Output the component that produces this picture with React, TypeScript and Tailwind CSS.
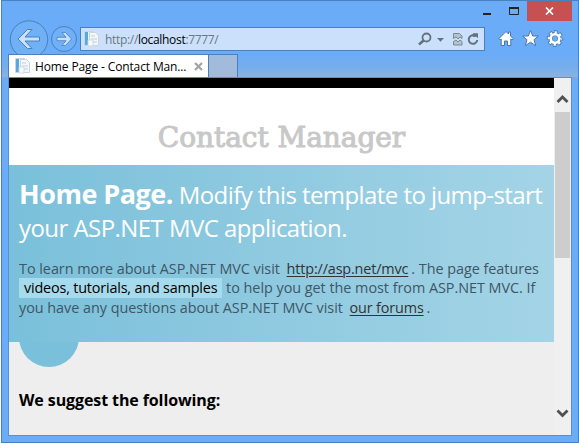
import type { ReactNode } from "react";

function PageIcon() {
  return (
    <svg className="block shrink-0" width="16" height="16" viewBox="0 0 16 16">
      <path d="M.5.5h9v14h-9z" fill="#f1f6fb" stroke="#c9d5df" />
      <path d="M1 1h3v13H1z" fill="#56a9dc" />
      <path d="M5.500 1.500h6l3 3v10h-9z" fill="#f4f7fa" stroke="#c9d5df" />
      <path d="M7 5h4M7 8h6M7 11h6" stroke="#c3cdd6" />
      <path d="M4 9h5v6H4z" fill="#f7f9fb" stroke="#ccd5dd" strokeWidth=".8" />
    </svg>
  );
}

function TitleBar() {
  return (
    <div className="flex h-5 shrink-0 justify-end pr-[6px]">
      <svg className="block" width="54" height="20" viewBox="473 1 54 20">
        <path d="M483 13h8v2h-8z" fill="#222" />
        <path d="M509.500 8h9v6.500h-9z" fill="none" stroke="#222" />
        <path d="M509 7h10v2h-10z" fill="#222" />
      </svg>
      <div className="flex h-5 w-[45px] items-center justify-center bg-[#c75050]">
        <svg width="9" height="8" viewBox="0 0 9 8">
          <path d="M1 .5l7 7M8 .5l-7 7" stroke="#fff" strokeWidth="1.700" />
        </svg>
      </div>
    </div>
  );
}

function NavRow() {
  return (
    <div className="flex h-[33px] shrink-0 items-start">
      <svg className="block shrink-0 overflow-visible" width="78" height="33" viewBox="2 21 78 33">
        <circle cx="29" cy="39.500" r="18.700" fill="#6fb0f7" stroke="#4a80bd" />
        <path d="M18 39L27.500 29.500H32L25 37H39.500V41H25L32 48.500H27.500Z" fill="#cbe1fb" stroke="#4a80bd" />
        <circle cx="64" cy="39" r="12.500" fill="#6fb0f7" stroke="#4a80bd" />
        <path d="M71.500 39L65.500 32.500H62L66 37.300H57V40.700H66L62 45.500H65.500Z" fill="#cbe1fb" stroke="#4a80bd" strokeWidth=".8" />
      </svg>
      <div className="mt-[6px] flex h-6 w-[405px] shrink-0 items-center border border-[#4a80bd] bg-[#cbe1fb] pl-[3px]">
        <PageIcon />
        <span className="ml-[5px] whitespace-nowrap pt-px text-[12px] tracking-[-0.32px] text-[#6d7783]">
          http://<span className="text-black">localhost</span>:7777/
        </span>
        <svg className="ml-auto block" width="70" height="22" viewBox="414 28 70 22">
          <circle cx="426.500" cy="37.500" r="4" fill="none" stroke="#64717e" strokeWidth="1.800" />
          <path d="M423.500 40.500l-4.500 4" stroke="#64717e" strokeWidth="2.500" />
          <path d="M437 38h7l-3.500 3.800z" fill="#64717e" />
          <path d="M453.500 33.500h6l2.500 2.500v2.500l-2-1.500-2 2-2-2-2.500 1.500z" fill="#b4c2d0" stroke="#7b8995" />
          <path d="M453.500 41.500l2.500-1.500 2 2 2-2 2 1.500v3.500h-8.500z" fill="#b4c2d0" stroke="#7b8995" />
          <path d="M475.800 36.200a4.300 4.300 0 1 0 1.500 3.800" fill="none" stroke="#64717e" strokeWidth="2" />
          <path d="M473 33.200h5v5l-1.500-1.500h-4z" fill="#64717e" />
        </svg>
      </div>
      <svg className="block shrink-0" width="80" height="33" viewBox="485 21 80 33">
        <g fill="#fff" stroke="#4777ae" strokeWidth="1">
          <path d="M499 38.500L506 31.500L508.500 34V32H510.500V36L513.300 38.700L512 40L510.800 39V45.500H507.500V41H504.500V45.500H501.200V39L500.200 40Z" />
          <path d="M530.500 30.500L532.700 36H538.300L534 39.700L535.700 45.700L530.500 42.200L525.300 45.700L527 39.700L522.700 36H528.300Z" />
        </g>
        <g fill="none" stroke="#4777ae">
          <circle cx="555" cy="38.500" r="4.500" strokeWidth="4" />
          <circle cx="555" cy="38.500" r="6.500" strokeWidth="3.500" strokeDasharray="3.300 1.805" strokeDashoffset="1.650" />
        </g>
        <g fill="none" stroke="#fff">
          <circle cx="555" cy="38.500" r="4.300" strokeWidth="2.600" />
          <circle cx="555" cy="38.500" r="6.100" strokeWidth="2.400" strokeDasharray="2.200 2.591" strokeDashoffset="1.100" />
        </g>
      </svg>
    </div>
  );
}

function TabRow() {
  return (
    <div className="relative flex h-[23px] shrink-0 bg-linear-to-b from-[#6aacf7] via-[#74adee] to-[#88b3e2] pl-[6px]">
      <div className="flex w-[201px] shrink-0 items-center border border-b-0 border-[#4a80bd] bg-white pl-[6px] pr-[5px]">
        <PageIcon />
        <span className="ml-[4px] whitespace-nowrap pt-px text-[12px] tracking-[-0.13px] text-black">Home Page - Contact Man...</span>
        <svg className="ml-auto block shrink-0" width="9" height="9" viewBox="0 0 9 9">
          <path d="M1 1l7 7M8 1L1 8" stroke="#a3a3a3" strokeWidth="2.200" />
        </svg>
      </div>
      <div className="w-[29px] border border-b-0 border-l-0 border-[#4a80bd] bg-[#a3bbda]" />
    </div>
  );
}

function Link({ children }: { children: ReactNode }) {
  return <a className="mx-[3px] tracking-[-0.15px] text-[#333] underline decoration-1 underline-offset-2">{children}</a>;
}

function Page() {
  return (
    <main className="flex w-[545px] shrink-0 flex-col bg-[#eee]">
      <div className="h-[10px] shrink-0 bg-black" />
      <header className="flex h-[77px] shrink-0 items-center justify-center bg-white pt-[23px]">
        <h1 className="whitespace-nowrap font-['DejaVu_Serif',serif] text-[28px] leading-none tracking-[-0.05px] text-[#c8c8c8] [-webkit-text-stroke:1px_#c8c8c8]">
          Contact Manager
        </h1>
      </header>
      <section className="h-[177px] shrink-0 whitespace-nowrap bg-linear-to-r from-[#7ac0da] to-[#a4d4e6] pl-[10px] pt-[13px]">
        <div className="h-[33px] text-[24px] leading-[33px] tracking-[-0.57px] text-white">
          <b className="text-[27px] leading-none tracking-[-0.5px]">Home Page.</b> Modify this template to jump-start
        </div>
        <div className="h-[33px] text-[24px] leading-[33px] tracking-[-0.56px] text-white">your ASP.NET MVC application.</div>
        <div className="pt-[15px] text-[14.4px] tracking-[-0.03px] text-[#3e5667]">
          <p className="h-[19px] leading-[19px]">
            To learn more about ASP.NET MVC visit <Link>http://asp.net/mvc</Link>. The page features
          </p>
          <p className="h-5 leading-5">
            <mark className="inline-block bg-[#a6dbed] px-[5px] tracking-[-0.18px] text-black">videos, tutorials, and samples</mark> to help you get the most from ASP.NET MVC. If
          </p>
          <p className="h-[19px] leading-[19px]">
            you have any questions about ASP.NET MVC visit <Link>our forums</Link>.
          </p>
        </div>
      </section>
      <div className="ml-[10px] h-[25px] w-[60px] shrink-0 overflow-hidden">
        <div className="-mt-[35px] size-[60px] rounded-full bg-[#7ac0da]" />
      </div>
      <h2 className="mt-[21px] whitespace-nowrap pl-[10px] text-[16px] font-bold leading-6 tracking-[-0.1px] text-black">We suggest the following:</h2>
    </main>
  );
}

function Scrollbar() {
  return (
    <div className="flex w-[17px] flex-col items-center bg-[#f0f0f0]">
      <svg className="block shrink-0" width="17" height="34" viewBox="554 78 17 34">
        <path d="M557.500 102l5-5 5 5" fill="none" stroke="#505050" strokeWidth="2.800" />
      </svg>
      <div className="h-[146px] w-[15px] bg-[#cdcdcd]" />
      <svg className="mt-auto block shrink-0" width="17" height="34" viewBox="554 401 17 34">
        <path d="M557.500 410.500l5 5 5-5" fill="none" stroke="#505050" strokeWidth="2.800" />
      </svg>
    </div>
  );
}

export default function App() {
  return (
    <div className="h-[443px] w-[579px] overflow-hidden bg-white pl-[1px] font-['Open_Sans','Noto_Sans',sans-serif]">
      <div className="flex h-[443px] w-[578px] flex-col border border-[#4a80bd] bg-[#6aacf7]">
        <TitleBar />
        <NavRow />
        <TabRow />
        <div className="ml-[6px] flex h-[359px] w-[564px] border border-[#5690d0]">
          <Page />
          <Scrollbar />
        </div>
      </div>
    </div>
  );
}
